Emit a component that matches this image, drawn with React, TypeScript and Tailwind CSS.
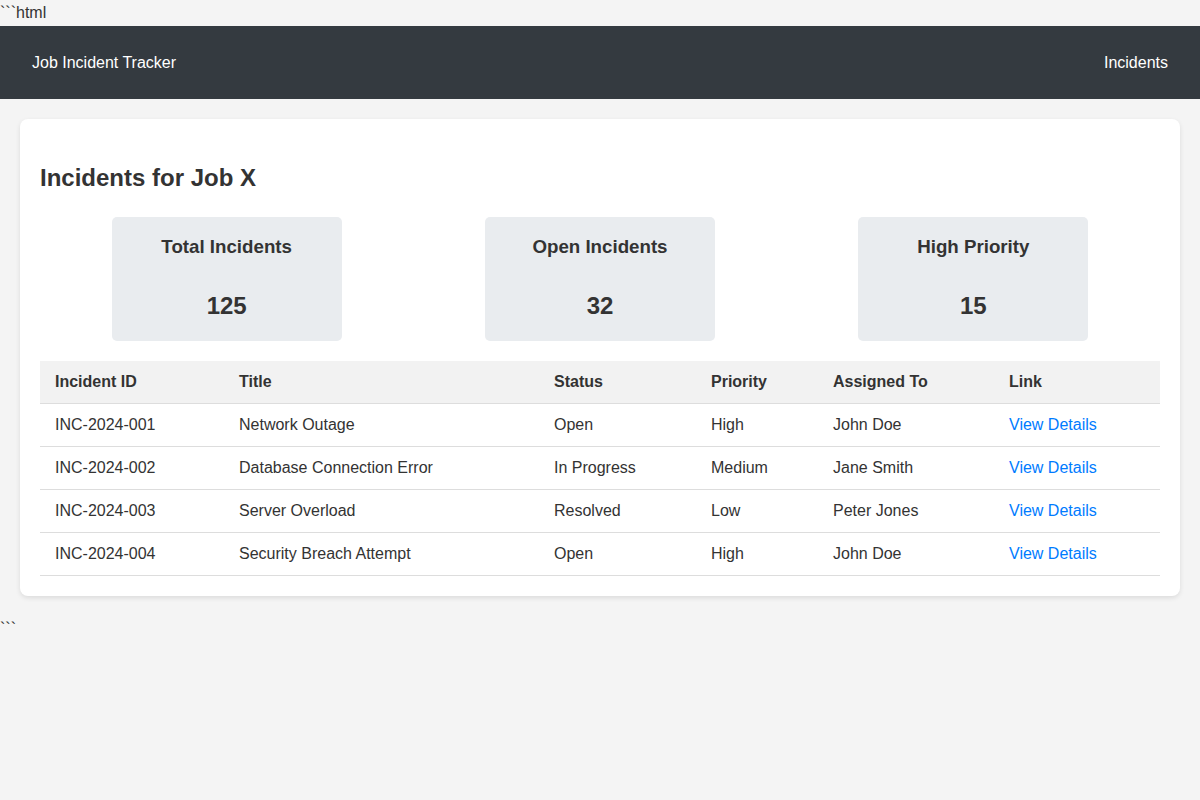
const incidents = [
  { id: "INC-2024-001", title: "Network Outage", status: "Open", priority: "High", assignee: "John Doe" },
  { id: "INC-2024-002", title: "Database Connection Error", status: "In Progress", priority: "Medium", assignee: "Jane Smith" },
  { id: "INC-2024-003", title: "Server Overload", status: "Resolved", priority: "Low", assignee: "Peter Jones" },
  { id: "INC-2024-004", title: "Security Breach Attempt", status: "Open", priority: "High", assignee: "John Doe" },
];

const stats = [
  { label: "Total Incidents", value: 125 },
  { label: "Open Incidents", value: 32 },
  { label: "High Priority", value: 15 },
];

export default function App() {
  return (
    <div className="min-h-[800px] bg-[#f4f4f4] font-['Liberation_Sans',Arial,sans-serif] text-[16px] leading-[1.6] text-[#333]">
      <div className="h-[26px]">```html</div>

      {/* Top bar */}
      <header className="flex h-[73px] items-center justify-between bg-[#343a40] px-8 text-white">
        <span>Job Incident Tracker</span>
        <a href="#" className="text-white">Incidents</a>
      </header>

      {/* Main card */}
      <main className="mx-5 mt-5 rounded-lg bg-white p-5 shadow-[0_2px_5px_rgba(0,0,0,0.1)]">
        <h2 className="mt-5 mb-5 text-[24px] font-bold leading-[38.4px]">Incidents for Job X</h2>

        <div className="flex justify-around">
          {stats.map((s) => (
            <div key={s.label} className="w-[230px] rounded-[5px] bg-[#e9ecef] pt-[15px] pb-[15px] text-center">
              <h3 className="text-[18.72px] font-bold leading-[29px]">{s.label}</h3>
              <p className="mt-[26px] text-[24px] font-bold leading-[38.4px]">{s.value}</p>
            </div>
          ))}
        </div>

        <table className="mt-5 w-full table-fixed border-collapse text-left">
          <thead>
            <tr className="border-b border-[#ddd] bg-[#f2f2f2]">
              <th className="w-[184px] px-[15px] py-[8.2px] font-bold">Incident ID</th>
              <th className="w-[315px] px-[15px] py-[8.2px] font-bold">Title</th>
              <th className="w-[157px] px-[15px] py-[8.2px] font-bold">Status</th>
              <th className="w-[122px] px-[15px] py-[8.2px] font-bold">Priority</th>
              <th className="w-[176px] px-[15px] py-[8.2px] font-bold">Assigned To</th>
              <th className="px-[15px] py-[8.2px] font-bold">Link</th>
            </tr>
          </thead>
          <tbody>
            {incidents.map((inc) => (
              <tr key={inc.id} className="border-b border-[#ddd]">
                <td className="px-[15px] py-[8.2px]">{inc.id}</td>
                <td className="px-[15px] py-[8.2px]">{inc.title}</td>
                <td className="px-[15px] py-[8.2px]">{inc.status}</td>
                <td className="px-[15px] py-[8.2px]">{inc.priority}</td>
                <td className="px-[15px] py-[8.2px]">{inc.assignee}</td>
                <td className="px-[15px] py-[8.2px]">
                  <a href="#" className="text-[#007bff]">View Details</a>
                </td>
              </tr>
            ))}
          </tbody>
        </table>
      </main>

      <div className="mt-5">```</div>
    </div>
  );
}
